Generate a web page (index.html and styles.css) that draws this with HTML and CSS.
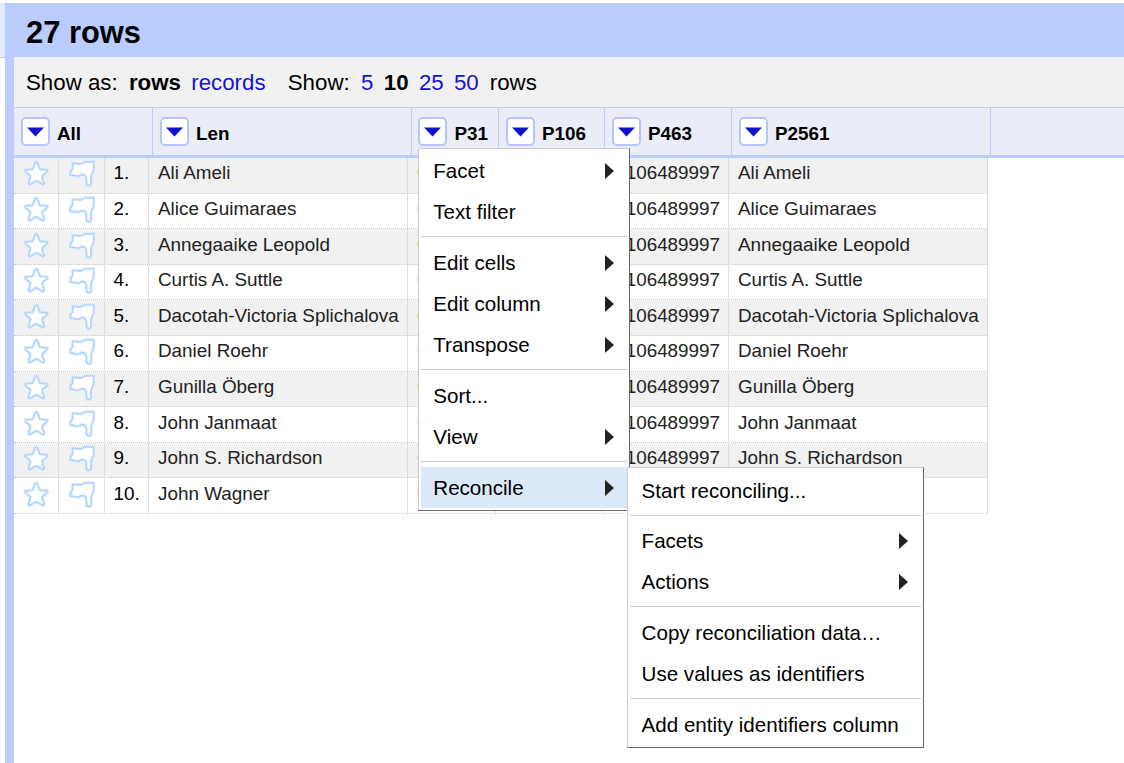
FILE: index.html
```
<!DOCTYPE html>
<html lang="en">
<head>
<meta charset="utf-8">
<title>27 rows</title>
<link rel="stylesheet" href="styles.css">
</head>
<body>
<svg class="defs" width="0" height="0">
  <symbol id="star" viewBox="0 0 27 27"><path class="halo" d="M12.6 2.3 H14 L16.8 9.4 L24.2 10 L24.4 11.2 L18.9 16 L21 23.6 L20 24.4 L13.3 20.4 L6.6 24.4 L5.6 23.6 L7.7 16 L2.2 11.2 L2.4 10 L9.8 9.4 Z"/><path d="M12.6 2.3 H14 L16.8 9.4 L24.2 10 L24.4 11.2 L18.9 16 L21 23.6 L20 24.4 L13.3 20.4 L6.6 24.4 L5.6 23.6 L7.7 16 L2.2 11.2 L2.4 10 L9.8 9.4 Z"/></symbol>
  <symbol id="flag" viewBox="0 0 27 27"><path class="halo" d="M4.8 3.4 L12.5 4.2 L17.5 2 L25.6 2 L25.6 9.5 L22.8 16.5 L23 23 Q22.6 25.7 20.5 25.5 L18.7 24.5 L18.4 17 L16.2 14.6 L13.5 14.4 L10.5 16 L2.4 14.8 L2.8 11.4 L4.8 9 Z"/><path d="M4.8 3.4 L12.5 4.2 L17.5 2 L25.6 2 L25.6 9.5 L22.8 16.5 L23 23 Q22.6 25.7 20.5 25.5 L18.7 24.5 L18.4 17 L16.2 14.6 L13.5 14.4 L10.5 16 L2.4 14.8 L2.8 11.4 L4.8 9 Z"/></symbol>
  <symbol id="down" viewBox="0 0 17 10"><path d="M0 0.5 H17 L8.5 9.5 Z"/></symbol>
  <symbol id="right" viewBox="0 0 9 16"><path d="M0 0 L9 8 L0 16 Z"/></symbol>
</svg>
<div class="app">
  <div class="side"></div>
  <main class="panel">
    <h1 class="summary">27 rows</h1>
    <div class="toolbar">
      <span>Show as:</span><b class="mode">rows</b><a class="records">records</a>
      <span class="show">Show:</span><a>5</a><b>10</b><a>25</a><a>50</a><span class="unit">rows</span>
    </div>
    <div class="head">
      <div class="th"><span class="btn"><svg><use href="#down"/></svg></span>All</div>
      <div class="th"><span class="btn"><svg><use href="#down"/></svg></span>Len</div>
      <div class="th"><span class="btn"><svg><use href="#down"/></svg></span>P31</div>
      <div class="th"><span class="btn"><svg><use href="#down"/></svg></span>P106</div>
      <div class="th"><span class="btn"><svg><use href="#down"/></svg></span>P463</div>
      <div class="th"><span class="btn"><svg><use href="#down"/></svg></span>P2561</div>
    </div>
    <div class="rows">
      <div class="row"><i><svg><use href="#star"/></svg></i><i><svg><use href="#flag"/></svg></i><span class="num">1.</span><span>Ali Ameli</span><span>Q5</span><span></span><span>Q106489997</span><span>Ali Ameli</span></div>
      <div class="row"><i><svg><use href="#star"/></svg></i><i><svg><use href="#flag"/></svg></i><span class="num">2.</span><span>Alice Guimaraes</span><span>Q5</span><span></span><span>Q106489997</span><span>Alice Guimaraes</span></div>
      <div class="row"><i><svg><use href="#star"/></svg></i><i><svg><use href="#flag"/></svg></i><span class="num">3.</span><span>Annegaaike Leopold</span><span>Q5</span><span></span><span>Q106489997</span><span>Annegaaike Leopold</span></div>
      <div class="row"><i><svg><use href="#star"/></svg></i><i><svg><use href="#flag"/></svg></i><span class="num">4.</span><span>Curtis A. Suttle</span><span>Q5</span><span></span><span>Q106489997</span><span>Curtis A. Suttle</span></div>
      <div class="row"><i><svg><use href="#star"/></svg></i><i><svg><use href="#flag"/></svg></i><span class="num">5.</span><span>Dacotah-Victoria Splichalova</span><span>Q5</span><span></span><span>Q106489997</span><span>Dacotah-Victoria Splichalova</span></div>
      <div class="row"><i><svg><use href="#star"/></svg></i><i><svg><use href="#flag"/></svg></i><span class="num">6.</span><span>Daniel Roehr</span><span>Q5</span><span></span><span>Q106489997</span><span>Daniel Roehr</span></div>
      <div class="row"><i><svg><use href="#star"/></svg></i><i><svg><use href="#flag"/></svg></i><span class="num">7.</span><span>Gunilla Öberg</span><span>Q5</span><span></span><span>Q106489997</span><span>Gunilla Öberg</span></div>
      <div class="row"><i><svg><use href="#star"/></svg></i><i><svg><use href="#flag"/></svg></i><span class="num">8.</span><span>John Janmaat</span><span>Q5</span><span></span><span>Q106489997</span><span>John Janmaat</span></div>
      <div class="row"><i><svg><use href="#star"/></svg></i><i><svg><use href="#flag"/></svg></i><span class="num">9.</span><span>John S. Richardson</span><span>Q5</span><span></span><span>Q106489997</span><span>John S. Richardson</span></div>
      <div class="row"><i><svg><use href="#star"/></svg></i><i><svg><use href="#flag"/></svg></i><span class="num">10.</span><span>John Wagner</span><span>Q5</span><span></span><span>Q106489997</span><span>John Wagner</span></div>
    </div>
  </main>
</div>
<div class="menu column-menu">
  <div class="item">Facet<svg><use href="#right"/></svg></div>
  <div class="item">Text filter</div>
  <hr>
  <div class="item">Edit cells<svg><use href="#right"/></svg></div>
  <div class="item">Edit column<svg><use href="#right"/></svg></div>
  <div class="item">Transpose<svg><use href="#right"/></svg></div>
  <hr>
  <div class="item">Sort...</div>
  <div class="item">View<svg><use href="#right"/></svg></div>
  <hr>
  <div class="item active">Reconcile<svg><use href="#right"/></svg></div>
</div>
<div class="menu sub-menu">
  <div class="item">Start reconciling...</div>
  <hr class="first">
  <div class="item">Facets<svg><use href="#right"/></svg></div>
  <div class="item">Actions<svg><use href="#right"/></svg></div>
  <hr>
  <div class="item">Copy reconciliation data…</div>
  <div class="item">Use values as identifiers</div>
  <hr>
  <div class="item">Add entity identifiers column</div>
</div>
</body>
</html>
```
FILE: styles.css
```
* { box-sizing: border-box; }
body { margin: 0; height: 763px; overflow: hidden; background: #fff; color: #000; font-family: "Liberation Sans", Arial, sans-serif; }
.defs { display: block; }
.app { display: flex; height: 763px; padding-top: 3px; }
.side { flex: none; width: 5px; height: 55px; background: #e3e9ff; border-bottom: 1px solid #bbccff; }
.panel { flex: 1; border-left: 9px solid #bbccff; }
.summary { margin: 0; height: 54px; padding-left: 12px; background: #bbccff; font-size: 30.86px; line-height: 60px; }
.toolbar { display: flex; height: 50px; padding-left: 12px; background: #f1f1f1; font-size: 22.29px; line-height: 51px; white-space: nowrap; }
.toolbar a { color: #1a11cc; margin-left: 10.3px; }
.toolbar b { margin-left: 10.3px; }
.toolbar .mode { margin-left: 11.3px; }
.toolbar .show { margin-left: 22.2px; }
.toolbar .show + a { margin-left: 11.4px; }
.toolbar .unit { margin-left: 11px; }
.head { display: grid; grid-template-columns: 139px 259px 87px 106px 127px 259px; height: 51px; background: #eaedf8; border-top: 1px solid #bbccff; border-bottom: 3px solid #bbccff; }
.th { display: flex; padding: 9px 0 0 7px; border-right: 1px solid #bbccff; font-size: 18.86px; font-weight: bold; line-height: 33px; }
.th:nth-child(3) { padding-left: 6.4px; }
.btn { display: flex; justify-content: center; width: 29px; height: 29px; margin-right: 7px; padding-top: 8px; border: 2px solid #b9c3ff; border-radius: 5px; background: #fff; }
.btn svg { width: 17px; height: 10px; fill: #1111cc; }
.row { display: grid; grid-template-columns: 45px 46px 44px 259px 88px 106px 127px 259px; width: 974px; height: 35.62px; border-bottom: 1px dotted #ccc; font-size: 18.86px; line-height: 30px; color: #222; }
.row:nth-child(odd) { background: #f1f1f1; }
.row > * { padding: 0.38px 0 0 9px; border-right: 1px solid #ddd; white-space: nowrap; }
.row .num { padding-left: 8.6px; color: #000; }
.row i { padding-left: 8.6px; }
.row i svg { display: block; width: 27px; height: 27px; margin-top: 2px; fill: #fff; stroke: #b3d4ff; stroke-width: 1.7; stroke-linejoin: round; }
.halo { stroke: #d9e9ff; stroke-width: 3.4; }
.menu { position: absolute; padding: 2px; background: #fff; border: 1px solid; border-color: #ccc #666 #666 #ccc; font-size: 20.57px; }
.column-menu { left: 418px; top: 148px; width: 212px; height: 363px; padding-top: 1px; }
.sub-menu { left: 627px; top: 467px; width: 297px; height: 281px; }
.item { display: flex; justify-content: space-between; align-items: center; height: 41px; padding: 0 13px 0 12.3px; white-space: nowrap; }
.item svg { width: 9px; height: 16px; fill: #222; }
.sub-menu .item { padding-left: 11.6px; }
.active { background: #dbe8f8; }
.menu hr { height: 1px; margin: 4px 0 5px; border: 0; background: #ccc; }
.menu .first { margin-bottom: 4px; }
```
